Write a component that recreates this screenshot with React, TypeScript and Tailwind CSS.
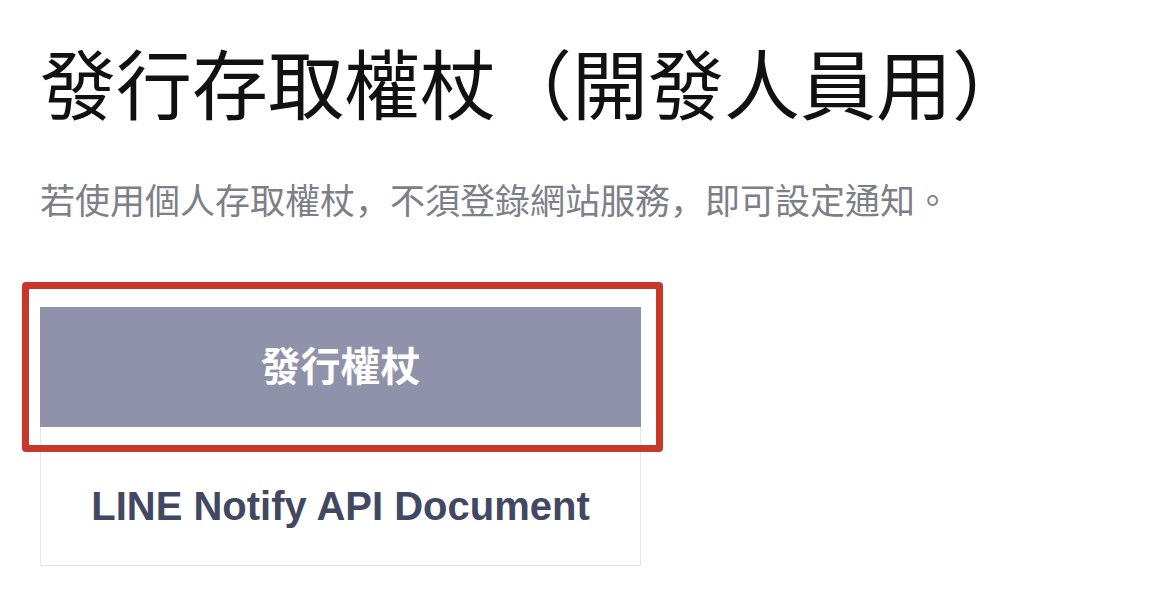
const cjk = "font-['Liberation_Sans','Noto_Sans_CJK_TC',sans-serif]";

const Comma = () => (
  <span className="font-['Noto_Sans_CJK_JP',sans-serif]">，</span>
);

export default function App() {
  return (
    <main className={`min-h-screen bg-white pl-[40px] pt-[40px] ${cjk}`}>
      <h1 className="text-[76px] leading-[96px] font-normal text-[#111111]">
        發行存取權杖（開發人員用）
      </h1>
      <p className="mt-[41px] text-[35px] leading-[44px] text-[#7c7f88]">
        若使用個人存取權杖
        <Comma />
        不須登錄網站服務
        <Comma />
        即可設定通知。
      </p>

      <div className="mt-[83px] w-[601px]">
        <div className="relative">
          {/* annotation frame */}
          <div className="pointer-events-none absolute -top-[25px] -bottom-[25px] -left-[18px] -right-[22px] z-10 rounded-[4px] border-[7px] border-[#c9372b]"></div>
          <button className="flex h-[120px] w-full items-center justify-center bg-[#9092ab] text-[40px] font-bold text-white">
            發行權杖
          </button>
        </div>
        <a
          href="#"
          className="flex h-[139px] w-full items-center justify-center border border-t-0 border-[#e5e5e5] pt-[20px] text-[40px] font-bold text-[#434862]"
        >
          LINE Notify API Document
        </a>
      </div>
    </main>
  );
}
